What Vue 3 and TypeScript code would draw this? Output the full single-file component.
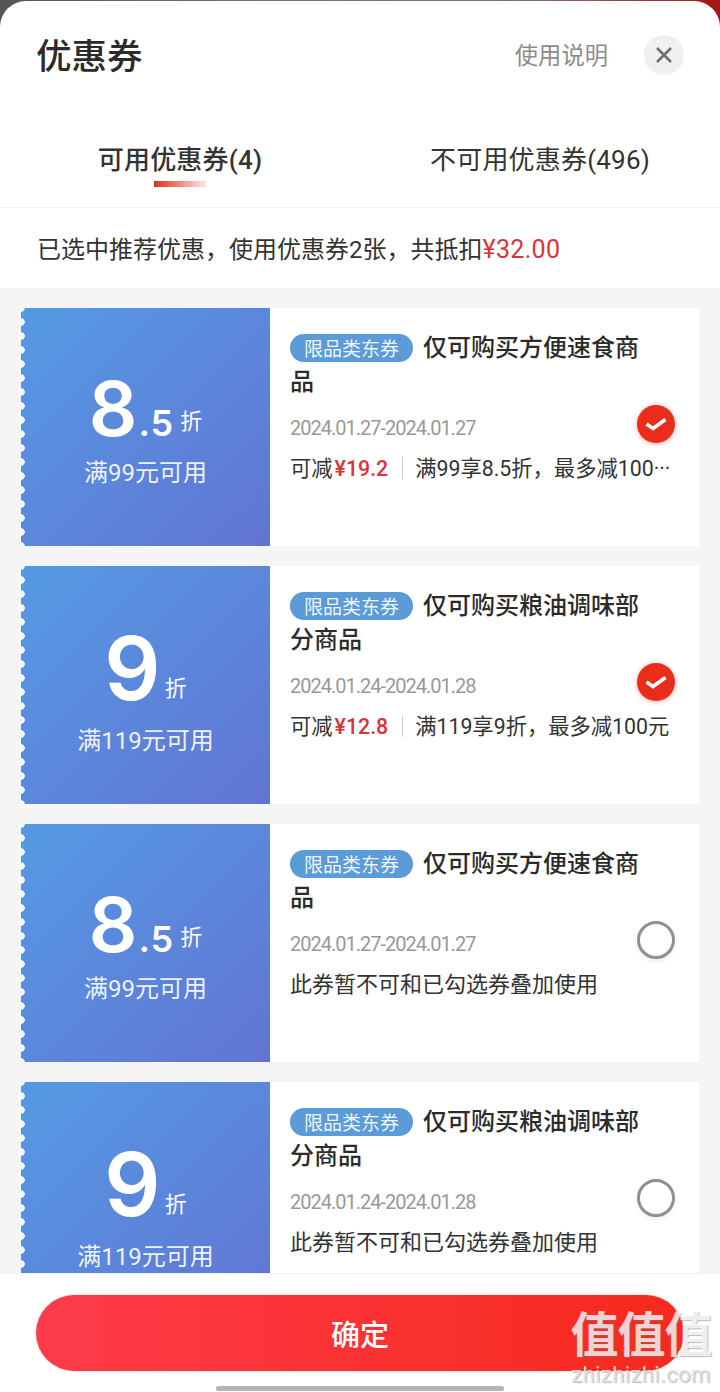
<script setup lang="ts">
interface Coupon {
  whole: string;
  fraction?: string;
  limit: string;
  title: string;
  date: string;
  selected: boolean;
  saving?: string;
  rule?: string;
  note?: string;
}

const tabs = ['可用优惠券(4)', '不可用优惠券(496)'];

const coupons: Coupon[] = [
  { whole: '8', fraction: '.5', limit: '满99元可用', title: '仅可购买方便速食商品', date: '2024.01.27-2024.01.27', selected: true, saving: '¥19.2', rule: '满99享8.5折，最多减100···' },
  { whole: '9', limit: '满119元可用', title: '仅可购买粮油调味部分商品', date: '2024.01.24-2024.01.28', selected: true, saving: '¥12.8', rule: '满119享9折，最多减100元' },
  { whole: '8', fraction: '.5', limit: '满99元可用', title: '仅可购买方便速食商品', date: '2024.01.27-2024.01.27', selected: false, note: '此券暂不可和已勾选券叠加使用' },
  { whole: '9', limit: '满119元可用', title: '仅可购买粮油调味部分商品', date: '2024.01.24-2024.01.28', selected: false, note: '此券暂不可和已勾选券叠加使用' },
];
</script>

<template>
  <div class="screen">
    <div class="sheet">
      <header class="head">
        <h1 class="title">优惠券</h1>
        <span class="help">使用说明</span>
        <button class="close" aria-label="关闭">
          <svg width="18" height="18" viewBox="0 0 18 18">
            <path d="M2 2 16 16M16 2 2 16" stroke="#707070" stroke-width="2.6" fill="none" />
          </svg>
        </button>
      </header>

      <nav class="tabs">
        <div v-for="(tab, i) in tabs" :key="tab" class="tab" :class="{ active: i === 0 }">{{ tab }}</div>
      </nav>

      <div class="summary">已选中推荐优惠，使用优惠券2张，共抵扣<span class="price">¥32.00</span></div>

      <main class="list">
        <article v-for="(c, i) in coupons" :key="i" class="coupon">
          <div class="left">
            <div class="discount" :class="{ large: !c.fraction }">
              <span class="whole">{{ c.whole }}</span>
              <span v-if="c.fraction" class="fraction">{{ c.fraction }}</span>
              <span class="unit">折</span>
            </div>
            <div class="limit">{{ c.limit }}</div>
          </div>
          <div class="right">
            <div class="name"><span class="tag">限品类东券</span>{{ c.title }}</div>
            <div class="date">{{ c.date }}</div>
            <div v-if="c.saving" class="desc">可减<b class="saving">{{ c.saving }}</b><i class="sep"></i>{{ c.rule }}</div>
            <div v-else class="desc note">{{ c.note }}</div>
            <span v-if="c.selected" class="check on">
              <svg width="24" height="18" viewBox="0 0 24 18">
                <path d="M2.5 9 9 13.5 21.5 4.5" stroke="#fff" stroke-width="3.6" fill="none" />
              </svg>
            </span>
            <span v-else class="check"></span>
          </div>
        </article>
      </main>

      <footer class="foot">
        <button class="confirm">确定</button>
        <div class="home-bar"></div>
        <div class="mark">
          <div class="mark-logo">值值值</div>
          <div class="mark-url">zhizhizhi.com</div>
        </div>
      </footer>
    </div>
  </div>
</template>

<style>
html,
body {
  margin: 0;
  background: #fff;
}
</style>

<style scoped>
.screen {
  width: 720px;
  height: 1392px;
  overflow: hidden;
  padding-top: 1px;
  box-sizing: border-box;
  background: linear-gradient(90deg, #555 0%, #777 40%, #8a6a60 75%, #a01818 100%);
  font-family: "Noto Sans CJK SC", sans-serif;
  color: #2b2b2b;
}

.sheet {
  height: 100%;
  display: flex;
  flex-direction: column;
  background: #fff;
  border-radius: 26px 26px 0 0;
  overflow: hidden;
}

.head {
  display: flex;
  align-items: center;
  padding: 34px 36px 0 36px;
  height: 40px;
  flex-shrink: 0;
}

.title {
  margin: -2px 0 0;
  flex: 1;
  font-size: 35.5px;
  font-weight: 500;
  line-height: 40px;
}

.help {
  font-size: 23.3px;
  color: #8c8c8c;
  margin: -3px 36px 0 0;
}

.close {
  width: 40px;
  height: 40px;
  padding: 0;
  border: none;
  border-radius: 50%;
  background: #f0f0f0;
  display: flex;
  align-items: center;
  justify-content: center;
}

.tabs {
  display: flex;
  height: 95px;
  margin-top: 37px;
  border-bottom: 1px solid #f0f0f0;
  flex-shrink: 0;
}

.tab {
  flex: 1;
  position: relative;
  text-align: center;
  font-family: Roboto, "Noto Sans CJK SC", sans-serif;
  font-size: 26px;
  letter-spacing: 0.2px;
  line-height: 36px;
  color: #333;
  padding-top: 30px;
}

.tab.active {
  font-weight: 500;
}

.tab.active::after {
  content: "";
  position: absolute;
  left: 50%;
  top: 69px;
  width: 52px;
  height: 6px;
  margin-left: -26px;
  background: linear-gradient(90deg, #e0301e, rgba(224, 48, 30, 0.12));
}

.summary {
  height: 80px;
  line-height: 84px;
  padding-left: 37px;
  font-family: Roboto, "Noto Sans CJK SC", sans-serif;
  font-size: 24px;
  color: #333;
  flex-shrink: 0;
}

.price {
  color: #d8343c;
  font-size: 25px;
  letter-spacing: 0.3px;
}

.list {
  flex: 1;
  min-height: 0;
  overflow: hidden;
  background: #f5f5f5;
  padding: 20px 21px 0;
  display: flex;
  flex-direction: column;
  gap: 20px;
}

.coupon {
  display: flex;
  height: 238px;
  flex-shrink: 0;
  background: #fff;
}

.left {
  width: 249px;
  flex-shrink: 0;
  position: relative;
  display: flex;
  flex-direction: column;
  align-items: center;
  color: #fff;
  background: linear-gradient(135deg, #559ae3, #6274d4);
}

.left::before {
  content: "";
  position: absolute;
  left: 0;
  top: 0;
  bottom: 0;
  width: 5px;
  background: radial-gradient(circle at 0 50%, #f5f5f5 3.5px, transparent 4px) 0 -7px / 5px 14px repeat-y;
}

.discount {
  height: 89px;
  margin-top: 54px;
  display: flex;
  align-items: baseline;
  font-family: Inter, Roboto, sans-serif;
  font-weight: 600;
  line-height: 92px;
}

.whole {
  font-size: 76px;
}

.fraction {
  font-size: 36px;
  letter-spacing: 1px;
  margin-left: 1px;
}

.unit {
  font-family: "Noto Sans CJK SC", sans-serif;
  font-weight: 400;
  font-size: 22px;
  margin-left: 6px;
  transform: translateY(-7px);
}

.discount.large {
  height: 101px;
  margin-top: 52px;
  line-height: 100px;
}

.large .whole {
  font-size: 88px;
}

.large .unit {
  margin-left: 4px;
  transform: translateY(-4px);
}

.limit {
  margin-top: 6px;
  font-family: Roboto, "Noto Sans CJK SC", sans-serif;
  font-size: 24px;
  line-height: 32px;
  color: rgba(255, 255, 255, 0.92);
}

.right {
  flex: 1;
  min-width: 0;
  position: relative;
  padding: 21px 20px 0;
}

.name {
  font-size: 24px;
  font-weight: 500;
  line-height: 34px;
  color: #2b2b2b;
  padding-right: 30px;
}

.tag {
  display: inline-block;
  width: 123px;
  height: 28px;
  line-height: 28px;
  margin-right: 10px;
  border-radius: 14px;
  background: #5b9bd8;
  color: rgba(255, 255, 255, 0.92);
  font-size: 19px;
  font-weight: 400;
  text-align: center;
  vertical-align: 0;
}

.date {
  margin-top: 16px;
  font-family: Roboto, sans-serif;
  font-size: 20px;
  letter-spacing: -1px;
  line-height: 30px;
  color: #999;
}

.desc {
  margin-top: 11px;
  font-family: Roboto, "Noto Sans CJK SC", sans-serif;
  font-size: 21.3px;
  line-height: 30px;
  color: #333;
  white-space: nowrap;
}

.desc.note {
  font-size: 22px;
}

.saving {
  margin-left: 2px;
  font-weight: 500;
  color: #d8343c;
}

.sep {
  display: inline-block;
  width: 1px;
  height: 22px;
  margin: 0 12px 0 14px;
  background: #ccc;
  vertical-align: -3px;
}

.check {
  position: absolute;
  right: 24px;
  top: 97px;
  width: 38px;
  height: 38px;
  box-sizing: border-box;
  border: 3px solid #909090;
  border-radius: 50%;
  box-shadow: 0 2px 5px rgba(0, 0, 0, 0.08);
  display: flex;
  align-items: center;
  justify-content: center;
}

.check.on {
  border: none;
  background: #ea2d1b;
  box-shadow: 0 1px 5px rgba(234, 45, 27, 0.4);
}

.foot {
  height: 119px;
  flex-shrink: 0;
  position: relative;
  box-sizing: border-box;
  padding: 21px 36px 0;
  background: #fff;
  border-top: 1px solid #f2f2f2;
}

.confirm {
  display: block;
  width: 100%;
  height: 76px;
  border: none;
  border-radius: 38px;
  background: linear-gradient(90deg, #fd3b4a, #f7291c);
  color: #fff;
  font-family: "Noto Sans CJK SC", sans-serif;
  font-size: 29px;
  font-weight: 500;
  box-shadow: 0 0 2px rgba(0, 0, 0, 0.3);
}

.home-bar {
  width: 288px;
  height: 5px;
  margin: 15px auto 0;
  border-radius: 3px;
  background: #b5b5b5;
}

.mark {
  position: absolute;
  right: 6px;
  top: 31px;
  width: 146px;
  text-align: center;
  color: rgba(255, 255, 255, 0.75);
  text-shadow: 1px 1px 1px rgba(120, 120, 120, 0.5);
}

.mark-logo {
  font-size: 48px;
  font-weight: 700;
  line-height: 52px;
  letter-spacing: -1px;
}

.mark-url {
  font-family: Roboto, sans-serif;
  font-size: 22px;
  letter-spacing: 0.4px;
  line-height: 24px;
  margin-top: 6px;
  color: rgba(225, 225, 225, 0.9);
}
</style>
